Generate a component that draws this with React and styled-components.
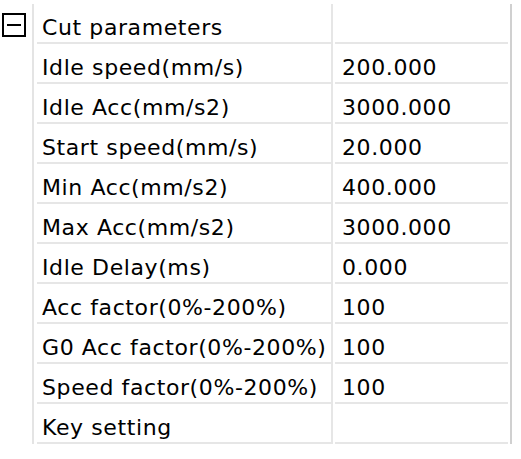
import styled, { createGlobalStyle } from "styled-components";

const GlobalStyle = createGlobalStyle`
  body {
    margin: 0;
    background: #fff;
    font-family: "DejaVu Sans", sans-serif;
  }
`;

const rows = [
  ["Idle speed(mm/s)", "200.000"],
  ["Idle Acc(mm/s2)", "3000.000"],
  ["Start speed(mm/s)", "20.000"],
  ["Min Acc(mm/s2)", "400.000"],
  ["Max Acc(mm/s2)", "3000.000"],
  ["Idle Delay(ms)", "0.000"],
  ["Acc factor(0%-200%)", "100"],
  ["G0 Acc factor(0%-200%)", "100"],
  ["Speed factor(0%-200%)", "100"],
  ["Key setting", ""],
];

const App = () => (
  <>
    <GlobalStyle />
    <Page>
      <Gutter>
        <Toggle>
          <svg width="24" height="24" viewBox="0 0 24 24">
            <rect x="1" y="1" width="22" height="22" fill="#fff" stroke="#000" strokeWidth="2" />
            <line x1="5" y1="12" x2="19" y2="12" stroke="#000" strokeWidth="2" />
          </svg>
        </Toggle>
      </Gutter>
      <Grid>
        <Name>Cut parameters</Name>
        <Value />
        {rows.map(([name, value]) => (
          <Row key={name} name={name} value={value} />
        ))}
      </Grid>
    </Page>
  </>
);

const Row = ({ name, value }) => (
  <>
    <Name>{name}</Name>
    <Value>{value}</Value>
  </>
);

const Page = styled.div`
  display: flex;
  width: 521px;
  height: 459px;
  padding-top: 4px;
  box-sizing: border-box;
`;

const Gutter = styled.div`
  width: 32px;
  padding-left: 2px;
  padding-top: 9px;
  box-sizing: border-box;
`;

const Toggle = styled.div`
  width: 24px;
  height: 24px;
  svg {
    display: block;
  }
`;

const Grid = styled.div`
  display: grid;
  grid-template-columns: 299px 177px;
  grid-auto-rows: 40px;
  align-self: flex-start;
  border-left: 2px solid #e4e4e4;
  border-right: 2px solid #d0d0d0;
`;

const Cell = styled.div`
  display: flex;
  align-items: center;
  padding-top: 8px;
  font-size: 22px;
  letter-spacing: 0.6px;
  color: #000;
  border-bottom: 2px solid #e6e6e6;
  box-sizing: border-box;
  white-space: nowrap;
  margin: 0 2px;
`;

const Name = styled(Cell)`
  padding-left: 5px;
  border-right: 2px solid #e6e6e6;
  margin-left: 3px;
  margin-right: 0;
`;

const Value = styled(Cell)`
  padding-left: 7px;
`;

export default App;
